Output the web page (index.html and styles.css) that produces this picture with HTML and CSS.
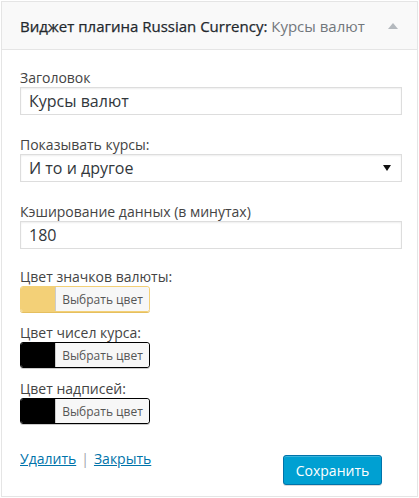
FILE: index.html
```html
<!DOCTYPE html>
<html lang="ru">
<head>
<meta charset="utf-8">
<link rel="stylesheet" href="styles.css">
</head>
<body>
<div class="widget">
  <div class="widget-top">
    <h3 class="title">Виджет плагина Russian Currency: <span class="in-title">Курсы валют</span></h3>
    <span class="arrow"></span>
  </div>
  <div class="widget-inside">
    <div class="field">
      <label class="label">Заголовок</label>
      <div class="input">Курсы валют</div>
    </div>
    <div class="field">
      <label class="label">Показывать курсы:</label>
      <div class="input select"><span>И то и другое</span><span class="caret"></span></div>
    </div>
    <div class="field last-text">
      <label class="label">Кэширование данных (в минутах)</label>
      <div class="input">180</div>
    </div>
    <div class="field color-field">
      <label class="label">Цвет значков валюты:</label>
      <div class="color-btn yellow"><span class="swatch"></span><span class="btn-text">Выбрать цвет</span></div>
    </div>
    <div class="field color-field">
      <label class="label">Цвет чисел курса:</label>
      <div class="color-btn black"><span class="swatch"></span><span class="btn-text">Выбрать цвет</span></div>
    </div>
    <div class="field color-field">
      <label class="label">Цвет надписей:</label>
      <div class="color-btn black"><span class="swatch"></span><span class="btn-text">Выбрать цвет</span></div>
    </div>
    <div class="controls">
      <div class="links"><a href="#">Удалить</a><span class="sep">|</span><a href="#">Закрыть</a></div>
      <button class="save">Сохранить</button>
    </div>
  </div>
</div>
</body>
</html>
```
FILE: styles.css
```css
* { box-sizing: border-box; }
html, body { margin: 0; padding: 0; background: #fff; }
body {
  font-family: "Open Sans", "Liberation Sans", sans-serif;
  color: #444;
  padding: 1px;
}
.widget {
  width: 417px;
  height: 496px;
  border: 1px solid #e5e5e5;
  background: #fff;
}
.widget-top {
  height: 48px;
  background: #f9f9f9;
  border-bottom: 1px solid #e5e5e5;
  display: flex;
  align-items: center;
  padding: 0 0 0 18px;
}
.title {
  margin: 0;
  font-size: 15px;
  font-weight: 400;
  color: #23282d;
  flex: 1;
  white-space: nowrap;
  -webkit-text-stroke: 0.25px #23282d;
}
.in-title {
  font-weight: 400;
  color: #72777c;
  -webkit-text-stroke: 0;
}
.arrow {
  width: 0; height: 0;
  border-left: 5px solid transparent;
  border-right: 5px solid transparent;
  border-bottom: 6px solid #b4b9be;
  margin-right: 19px;
}
.widget-inside {
  padding: 18px 15px 0 18px;
}
.field { margin-bottom: 20px; }
.field.last-text { margin-bottom: 18px; }
.label {
  display: block;
  font-size: 14px;
  line-height: 19px;
  color: #444;
}
.input {
  width: 382px;
  height: 28px;
  border: 1px solid #ddd;
  box-shadow: inset 0 1px 2px rgba(0,0,0,.07);
  font-size: 16px;
  color: #32373c;
  padding: 0 8px;
  display: flex;
  align-items: center;
}
.select { justify-content: space-between; padding-right: 10px; }
.caret {
  width: 0; height: 0;
  border-left: 4px solid transparent;
  border-right: 4px solid transparent;
  border-top: 6px solid #111;
}
.color-field { margin-bottom: 11px; }
.color-btn {
  display: flex;
  width: 130px;
  height: 26px;
  border: 1px solid #ccc;
  border-radius: 3px;
  overflow: hidden;
  box-shadow: 0 1px 0 #ccc;
}
.color-btn .swatch { width: 34px; }
.yellow { border-color: #f3d077; box-shadow: 0 1px 0 #e5bf5f; }
.yellow .swatch { background: #f3d077; }
.black { border-color: #000; }
.black .swatch { background: #000; }
.btn-text {
  flex: 1;
  background: #f7f7f7;
  font-size: 12px;
  color: #555;
  display: flex;
  align-items: center;
  justify-content: center;
  border-radius: 0 2px 2px 0;
  border-left: 1px solid #ccc;
}
.controls {
  display: flex;
  justify-content: space-between;
  align-items: flex-start;
  margin-top: 25px;
  padding-right: 20px;
}
.links { font-size: 14px; line-height: 19px; color: #a0a5aa; }
.links a { color: #0073aa; text-decoration: underline; }
.sep { margin: 0 5px; }
.save {
  margin-top: 6px;
  width: 99px;
  height: 30px;
  background: #00a0d2;
  border: 1px solid #0073aa;
  border-radius: 3px;
  box-shadow: inset 0 1px 0 rgba(120,200,230,.5), 0 1px 0 rgba(0,0,0,.15);
  color: #fff;
  font-family: "Open Sans", "Liberation Sans", sans-serif;
  font-size: 14px;
  padding: 0;
}
```
